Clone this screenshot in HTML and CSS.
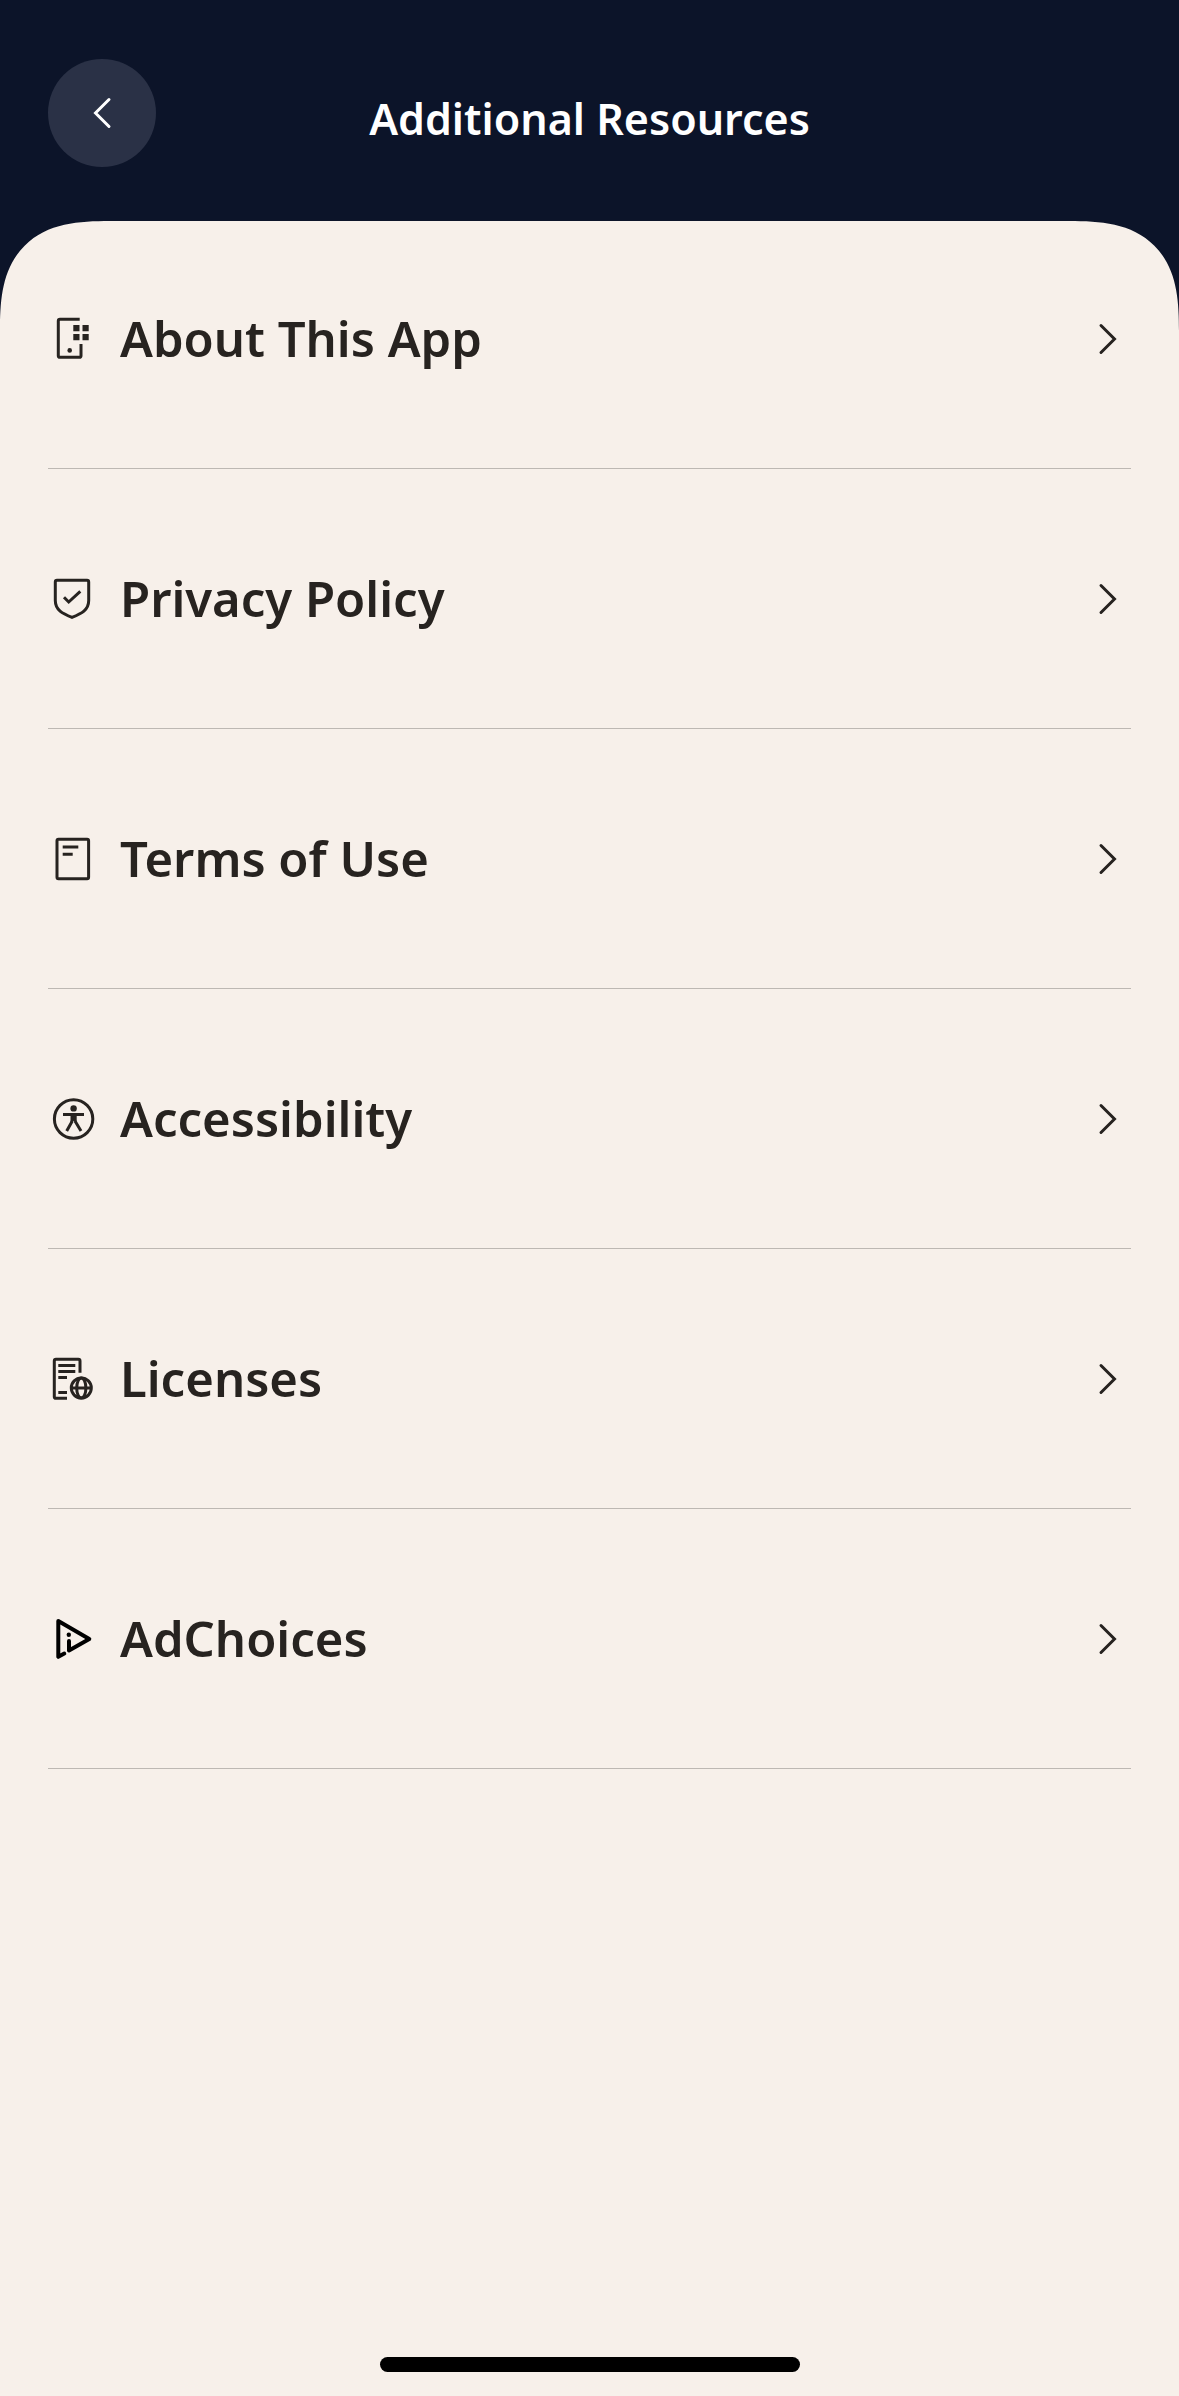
FILE: index.html
```html
<!DOCTYPE html>
<html lang="en">
<head>
    <meta charset="UTF-8">
    <meta name="viewport" content="width=device-width, initial-scale=1.0">
    <title>Additional Resources</title>
    <link rel="stylesheet" href="styles.css">
</head>
<body>
    <header class="header">
        <button class="back" type="button" aria-label="Back">
            <svg class="icon chevron" viewBox="0 0 48 48"><path d="M31 10.500L17.500 24L31 37.500"/></svg>
        </button>
        <h1 class="title">Additional Resources</h1>
    </header>

    <main class="sheet">
        <nav class="list">
            <a class="item" href="#about">
                <svg class="icon" viewBox="0 0 48 48">
                    <path d="M31.7 4.3H12Q10.3 4.3 10.3 6V40.7Q10.3 42.3 12 42.3H31.3Q33 42.3 33 40.7V29"/>
                    <path class="solid" d="M25.3 10h6.2v6.2h-6.2zM34.5 10h6.2v6.2h-6.2zM25.3 19h6.2v6.2h-6.2zM34.5 19h6.2v6.2h-6.2z"/>
                    <circle class="solid" cx="21.7" cy="35.4" r="2.3"/>
                </svg>
                <span class="label">About This App</span>
                <svg class="icon chevron" viewBox="0 0 48 48"><path d="M18 10.5L31.5 24L18 37.5"/></svg>
            </a>
            <a class="item" href="#privacy">
                <svg class="icon" viewBox="0 0 48 48">
                    <path d="M9 5.3H39Q40.7 5.3 40.7 7V25.5C40.7 35 33.5 38.5 24 42.3C14.5 38.5 7.3 35 7.3 25.5V7Q7.3 5.3 9 5.3Z"/>
                    <path d="M16 22.3L20.7 27L32.3 16.3"/>
                </svg>
                <span class="label">Privacy Policy</span>
                <svg class="icon chevron" viewBox="0 0 48 48"><path d="M18 10.5L31.5 24L18 37.5"/></svg>
            </a>
            <a class="item" href="#terms">
                <svg class="icon" viewBox="0 0 48 48">
                    <rect x="9" y="4.3" width="31.6" height="39.4" rx="1.5"/>
                    <path d="M14.7 12H30.3M14.7 19.3H24.7"/>
                </svg>
                <span class="label">Terms of Use</span>
                <svg class="icon chevron" viewBox="0 0 48 48"><path d="M18 10.5L31.5 24L18 37.5"/></svg>
            </a>
            <a class="item" href="#accessibility">
                <svg class="icon" viewBox="0 0 48 48">
                    <circle cx="25.6" cy="24" r="19.2"/>
                    <circle class="solid" cx="25.6" cy="13.4" r="3.2"/>
                    <path d="M15 19.4H36M18.7 36L24.3 26M33 36L27 26"/>
                    <path class="solid" d="M22.5 19.4H28.7V27L27.6 28L25.6 25.8L23.6 28L22.5 27Z"/>
                </svg>
                <span class="label">Accessibility</span>
                <svg class="icon chevron" viewBox="0 0 48 48"><path d="M18 10.5L31.5 24L18 37.5"/></svg>
            </a>
            <a class="item" href="#licenses">
                <svg class="icon" viewBox="0 0 48 48">
                    <path d="M19 43.3H8Q6.3 43.3 6.3 41.7V6Q6.3 4.3 8 4.3H30.3Q32 4.3 32 6V17.7"/>
                    <path d="M10.3 10.4H27.3M10.3 16.6H27.3M10.3 22.5H19M10.3 37.5H19"/>
                    <circle cx="33.3" cy="33" r="10"/>
                    <ellipse cx="33.3" cy="33" rx="4.6" ry="10"/>
                    <path d="M23.3 33H43.3"/>
                </svg>
                <span class="label">Licenses</span>
                <svg class="icon chevron" viewBox="0 0 48 48"><path d="M18 10.5L31.5 24L18 37.5"/></svg>
            </a>
            <a class="item" href="#adchoices">
                <svg class="icon adchoices" viewBox="0 0 48 48">
                    <path d="M16.3 38.6L10.3 41.8V6L41.3 24L21 35.4V26"/>
                    <circle class="solid" cx="20.8" cy="19.7" r="2.2"/>
                </svg>
                <span class="label">AdChoices</span>
                <svg class="icon chevron" viewBox="0 0 48 48"><path d="M18 10.5L31.5 24L18 37.5"/></svg>
            </a>
        </nav>
        <div class="home-bar"></div>
    </main>
</body>
</html>
```
FILE: styles.css
```css
* {
    box-sizing: border-box;
}

body {
    display: flex;
    flex-direction: column;
    min-height: 100vh;
    margin: 0;
    background-color: #0c1429;
    color: #272320;
    font-family: "Noto Sans", "Open Sans", sans-serif;
}

.header {
    display: grid;
    grid-template-columns: 108px 1fr 108px;
    align-items: center;
    padding: 59px 48px 54px;
    color: white;
}

.back {
    display: flex;
    justify-content: center;
    align-items: center;
    width: 108px;
    height: 108px;
    padding: 0;
    border: none;
    border-radius: 50%;
    background-color: #2a3146;
    color: white;
    cursor: pointer;
}

.title {
    margin: 0;
    padding-top: 12px;
    font-size: 43px;
    font-weight: 600;
    line-height: 60px;
    text-align: center;
}

.sheet {
    display: flex;
    flex-direction: column;
    flex: 1;
    padding: 0 48px 24px;
    border-radius: 84px 84px 0 0;
    background-color: #f7f0ea;
}

/* smoother corner where the browser can draw it */
@supports (corner-shape: squircle) {
    .sheet {
        border-radius: 110px 110px 0 0;
        corner-shape: superellipse(1.45);
    }
}

.item {
    display: flex;
    align-items: center;
    gap: 24px;
    height: 260px;
    border-bottom: 1px solid #bdb8b3;
    color: inherit;
    text-decoration: none;
}

.item:first-child {
    height: 248px;
    padding-bottom: 12px;
}

.label {
    flex: 1;
    padding-bottom: 2px;
    font-size: 49px;
    font-weight: 600;
    line-height: 60px;
}

.icon {
    flex: none;
    width: 48px;
    height: 48px;
    fill: none;
    stroke: currentColor;
    stroke-width: 3;
}

.solid {
    fill: currentColor;
    stroke: none;
}

.chevron {
    stroke-linecap: round;
}

.adchoices {
    color: black;
    stroke-width: 4;
    stroke-linecap: round;
    stroke-linejoin: round;
}

.home-bar {
    width: 420px;
    max-width: 60%;
    height: 15px;
    margin: auto auto 0;
    border-radius: 8px;
    background-color: black;
}
```
